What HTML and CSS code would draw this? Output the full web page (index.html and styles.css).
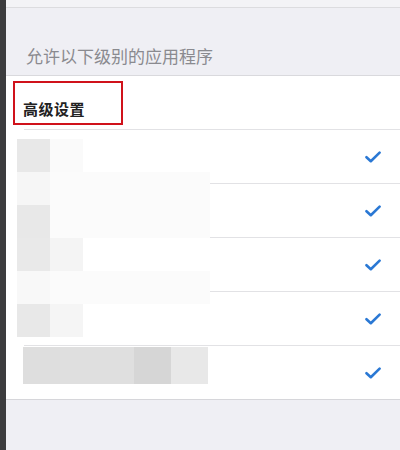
FILE: index.html
```html
<!DOCTYPE html>
<html lang="zh">
<head>
<meta charset="utf-8">
<link rel="stylesheet" href="styles.css">
</head>
<body>
<div class="side"></div>
<div class="main">
  <div class="topbar"></div>
  <div class="section-header">允许以下级别的应用程序</div>
  <div class="list">
    <div class="adv-row"><span class="adv-title">高级设置</span></div>
    <div class="row"><svg class="check" viewBox="0 0 16 12" width="16" height="12"><path d="M1.5 6.2 L5.8 10.2 L14.6 1.6"/></svg></div>
    <div class="row"><svg class="check" viewBox="0 0 16 12" width="16" height="12"><path d="M1.5 6.2 L5.8 10.2 L14.6 1.6"/></svg></div>
    <div class="row"><svg class="check" viewBox="0 0 16 12" width="16" height="12"><path d="M1.5 6.2 L5.8 10.2 L14.6 1.6"/></svg></div>
    <div class="row"><svg class="check" viewBox="0 0 16 12" width="16" height="12"><path d="M1.5 6.2 L5.8 10.2 L14.6 1.6"/></svg></div>
    <div class="row"><svg class="check" viewBox="0 0 16 12" width="16" height="12"><path d="M1.5 6.2 L5.8 10.2 L14.6 1.6"/></svg></div>
  </div>
  <div class="annot"></div>
  <div class="mosaic">
    <div class="blk" style="left:11px;top:139px;width:33px;height:33px;background:#e8e8e8"></div>
    <div class="blk" style="left:44px;top:139px;width:33px;height:33px;background:#fafafa"></div>
    <div class="blk" style="left:11px;top:172px;width:33px;height:33px;background:#f6f6f6"></div>
    <div class="blk" style="left:44px;top:172px;width:160px;height:33px;background:#fbfbfb"></div>
    <div class="blk" style="left:11px;top:205px;width:33px;height:33px;background:#e8e8e8"></div>
    <div class="blk" style="left:44px;top:205px;width:160px;height:33px;background:#fbfbfb"></div>
    <div class="blk" style="left:11px;top:238px;width:33px;height:33px;background:#e9e9e9"></div>
    <div class="blk" style="left:44px;top:238px;width:33px;height:33px;background:#f4f4f4"></div>
    <div class="blk" style="left:11px;top:271px;width:33px;height:33px;background:#f8f8f8"></div>
    <div class="blk" style="left:44px;top:271px;width:160px;height:33px;background:#fbfbfb"></div>
    <div class="blk" style="left:11px;top:304px;width:33px;height:33px;background:#e8e8e8"></div>
    <div class="blk" style="left:44px;top:304px;width:33px;height:33px;background:#f5f5f5"></div>
    <div class="blk" style="left:17px;top:347px;width:37px;height:37px;background:#dedede"></div>
    <div class="blk" style="left:54px;top:347px;width:74px;height:37px;background:#dfdfdf"></div>
    <div class="blk" style="left:128px;top:347px;width:37px;height:37px;background:#d6d6d6"></div>
    <div class="blk" style="left:165px;top:347px;width:37px;height:37px;background:#e8e8e8"></div>
  </div>
</div>
</body>
</html>
```

FILE: styles.css
```css
html, body {
  margin: 0;
  padding: 0;
  width: 400px;
  height: 450px;
  overflow: hidden;
}
body {
  display: flex;
  background: #efeff4;
  font-family: "Noto Sans CJK SC", "Noto Sans", sans-serif;
}
.side {
  width: 6px;
  flex: none;
  background: #3c3c3e;
}
.main {
  position: relative;
  flex: 1;
  background: #efeff4;
}
.topbar {
  height: 7px;
  background: #f3f3f6;
  border-bottom: 1px solid #dcdcdf;
}
.section-header {
  height: 67px;
  box-sizing: border-box;
  padding: 36px 0 0 20px;
  font-size: 17px;
  line-height: 24px;
  color: #8a8a8f;
}
.list {
  background: #fff;
  border-top: 1px solid #d9d9dd;
  border-bottom: 1px solid #d6d6da;
}
.adv-row {
  height: 53px;
  display: flex;
  align-items: center;
  padding-left: 17px;
  box-sizing: border-box;
  padding-top: 11px;
}
.adv-title {
  font-size: 15px;
  font-weight: bold;
  color: #222;
  letter-spacing: 0.5px;
}
.row {
  height: 53px;
  border-top: 1px solid #e2e2e5;
  margin-left: 18px;
  display: flex;
  align-items: center;
  justify-content: flex-end;
  padding-right: 19px;
}
.check {
  fill: none;
  stroke: #2a78d4;
  stroke-width: 2.6;
  stroke-linecap: round;
  stroke-linejoin: round;
  margin-top: 1px;
}
.annot {
  position: absolute;
  left: 7px;
  top: 81px;
  width: 106px;
  height: 40px;
  border: 2px solid #d0121b;
}
.mosaic {
  position: absolute;
  inset: 0;
  pointer-events: none;
}
.blk {
  position: absolute;
}
```
